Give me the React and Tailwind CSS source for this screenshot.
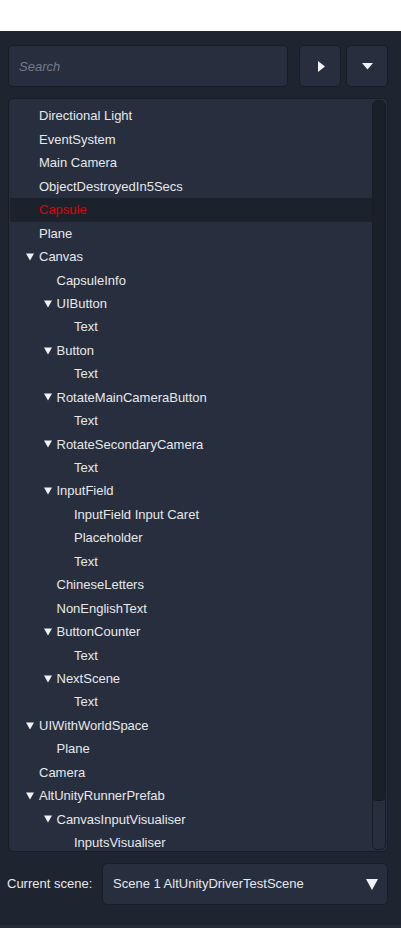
import React from "react";

const rows = [
  ["Directional Light", 0, false],
  ["EventSystem", 0, false],
  ["Main Camera", 0, false],
  ["ObjectDestroyedIn5Secs", 0, false],
  ["Capsule", 0, false, true],
  ["Plane", 0, false],
  ["Canvas", 0, true],
  ["CapsuleInfo", 1, false],
  ["UIButton", 1, true],
  ["Text", 2, false],
  ["Button", 1, true],
  ["Text", 2, false],
  ["RotateMainCameraButton", 1, true],
  ["Text", 2, false],
  ["RotateSecondaryCamera", 1, true],
  ["Text", 2, false],
  ["InputField", 1, true],
  ["InputField Input Caret", 2, false],
  ["Placeholder", 2, false],
  ["Text", 2, false],
  ["ChineseLetters", 1, false],
  ["NonEnglishText", 1, false],
  ["ButtonCounter", 1, true],
  ["Text", 2, false],
  ["NextScene", 1, true],
  ["Text", 2, false],
  ["UIWithWorldSpace", 0, true],
  ["Plane", 1, false],
  ["Camera", 0, false],
  ["AltUnityRunnerPrefab", 0, true],
  ["CanvasInputVisualiser", 1, true],
  ["InputsVisualiser", 2, false],
];

const indent = ["w-[16px]", "w-[33.5px]", "w-[51px]"];

function Down({ w = 8, h = 8, cls = "" }) {
  return (
    <svg width={w} height={h} viewBox="0 0 8 8" className={cls}>
      <polygon points="0,0.5 8,0.5 4,7.5" fill="#f2f2f2" />
    </svg>
  );
}

export default function App() {
  return (
    <div
      className="w-[401px] h-[928px] flex flex-col overflow-hidden"
      style={{ fontFamily: '"Liberation Sans", Arial, sans-serif' }}
    >
      <div className="h-[31px] bg-white shrink-0" />
      <div className="h-[894px] bg-[#1e2531] flex flex-col pl-[8px] pr-[13px] pt-[14px] shrink-0">
        {/* top bar */}
        <div className="flex h-[42px] shrink-0">
          <div className="w-[280px] h-full rounded-[5px] bg-[#272f3f] border border-[#181d26] flex items-center pl-[10px]">
            <span className="italic text-[13px] text-[#737a88] mt-[1px]">Search</span>
          </div>
          <div className="ml-[11px] w-[42px] h-full rounded-[5px] bg-[#272f3f] border border-[#181d26] flex items-center justify-center">
            <svg width="7" height="11" viewBox="0 0 7 11" className="ml-[2px]">
              <polygon points="0,0 7,5.5 0,11" fill="#f2f2f2" />
            </svg>
          </div>
          <div className="ml-[5px] w-[42px] h-full rounded-[5px] bg-[#272f3f] border border-[#181d26] flex items-center justify-center">
            <svg width="11" height="7" viewBox="0 0 11 7" className="mt-[1px]">
              <polygon points="0,0 11,0 5.5,6.5" fill="#f2f2f2" />
            </svg>
          </div>
        </div>

        {/* tree */}
        <div className="mt-[11px] h-[754px] shrink-0 rounded-[5px] bg-[#272f3f] border border-[#181d26] flex overflow-hidden">
          <div className="flex-1 pl-[1px] pt-[5.5px] overflow-hidden">
            {rows.map(([name, level, expanded, selected], i) => (
              <div
                key={i}
                className={
                  "flex items-center h-[23.45px] text-[13px] " +
                  (selected ? "bg-[#1c222c] text-[#e00000]" : "text-[#e8e8e8]")
                }
              >
                <div className={indent[level] + " shrink-0"} />
                <div className="w-[13px] shrink-0 flex items-center">
                  {expanded ? <Down /> : null}
                </div>
                <span className="whitespace-nowrap">{name}</span>
              </div>
            ))}
          </div>
          <div className="w-[15px] shrink-0 pr-[1px] py-[1px] flex flex-col">
            <div className="flex-1 rounded-[5px] border border-[#171c25] flex flex-col overflow-hidden">
              <div className="h-[700px] bg-[#1a2029] rounded-[4px] border-b border-[#141820]" />
            </div>
          </div>
        </div>

        {/* bottom */}
        <div className="mt-[11px] h-[42px] flex items-center shrink-0">
          <span className="ml-[-1px] w-[95px] text-[13px] text-[#e8e8e8] whitespace-nowrap">Current scene:</span>
          <div className="flex-1 h-full rounded-[5px] bg-[#272f3f] border border-[#181d26] flex items-center justify-between pl-[10px] pr-[9px]">
            <span className="text-[13px] text-[#e8e8e8] whitespace-nowrap">Scene 1 AltUnityDriverTestScene</span>
            <svg width="12" height="11" viewBox="0 0 12 11">
              <polygon points="0,0 12,0 6,11" fill="#f2f2f2" />
            </svg>
          </div>
        </div>
      </div>
      <div className="flex-1 bg-[#262d3a]" />
    </div>
  );
}
